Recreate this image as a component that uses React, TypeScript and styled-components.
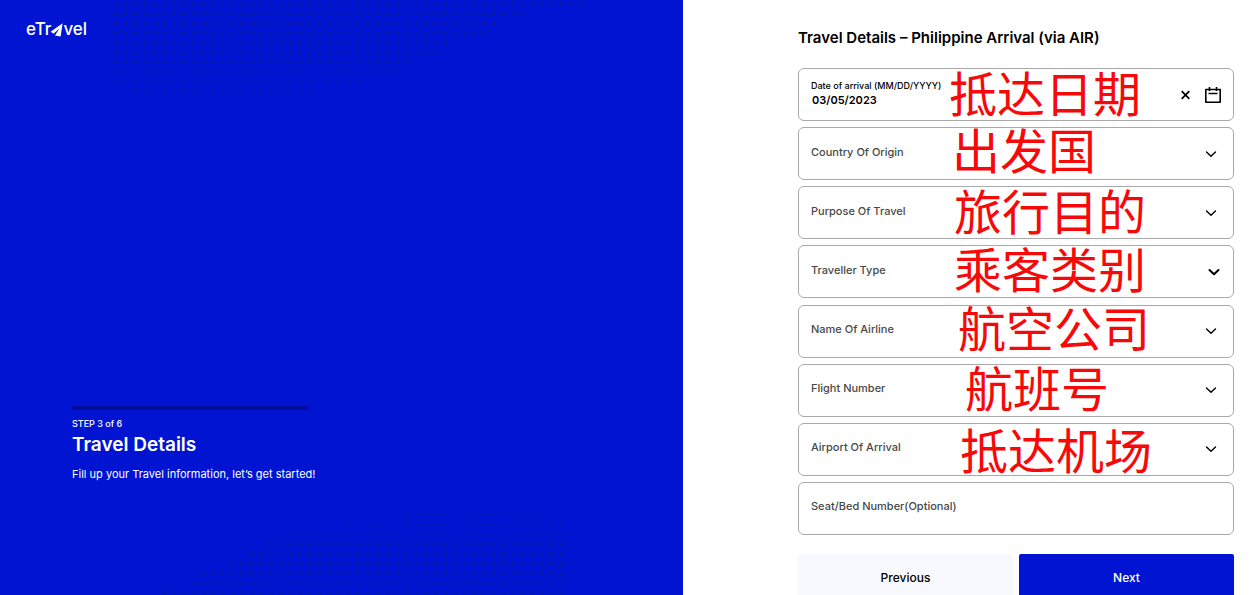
import React from 'react';
import styled, { createGlobalStyle } from 'styled-components';

const GlobalStyle = createGlobalStyle`
  *, *::before, *::after { box-sizing: border-box; }
  body { margin: 0; background: #fff; font-family: Inter, "Liberation Sans", sans-serif; color: #000; }
`;

const Page = styled.div`
  display: grid;
  grid-template-columns: 683fr 571fr;
  min-height: 100vh;
`;

const Hero = styled.section`
  position: relative;
  padding: 18px 24px 0 26px;
  background: #0014d2;
  color: #fff;
  overflow: hidden;
`;

const Dots = styled.svg<{ $edge: 'top' | 'bottom' }>`
  position: absolute;
  left: 0;
  ${(p) => p.$edge}: 0;
  width: 600px;
  height: 100px;
  fill: #0a1c9c;
  opacity: 0.75;
`;

const Logo = styled.div`
  display: flex;
  align-items: center;
  height: 22px;
  font-size: 17px;
  line-height: 22px;
  font-weight: 500;
`;

const LogoMark = styled.svg`
  margin: 2px -1px 0 -1px;
`;

const StepBlock = styled.div`
  position: relative;
  width: 236px;
  margin: 366px 0 0 46px;
  padding-top: 8px;
  border-top: 4px solid #000c9c;
  white-space: nowrap;
`;

const StepCount = styled.p`
  margin: 0;
  font-size: 9px;
  line-height: 12px;
  font-weight: 500;
`;

const StepTitle = styled.h1`
  margin: 2px 0 0;
  font-size: 19px;
  line-height: 26px;
  font-weight: 600;
`;

const StepText = styled.p`
  margin: 8px 0 0;
  font-size: 11px;
  line-height: 16px;
  font-weight: 400;
`;

const FormPanel = styled.form`
  display: flex;
  flex-direction: column;
  padding: 26px 20px 0 115px;
`;

const FormTitle = styled.h2`
  margin: 0 0 19px;
  font-size: 15px;
  line-height: 23px;
  font-weight: 600;
`;

const Fields = styled.div`
  display: flex;
  flex-direction: column;
  justify-content: space-between;
  min-height: 467px;
`;

const Field = styled.div`
  position: relative;
  display: flex;
  align-items: center;
  height: 53px;
  padding: 0 16px 0 12px;
  border: 1px solid #a9a9a9;
  border-radius: 6px;
`;

const Label = styled.label`
  padding-bottom: 4px;
  font-size: 11px;
  line-height: 16px;
  font-weight: 500;
  color: #484848;
  white-space: nowrap;
`;

const DateText = styled.div`
  display: flex;
  flex-direction: column;
  flex: 1;
  padding-bottom: 3px;
`;

const DateLabel = styled.label`
  font-size: 9px;
  line-height: 14px;
  font-weight: 500;
`;

const DateInput = styled.input`
  width: 100%;
  height: 14px;
  padding: 0 1px;
  border: 0;
  outline: 0;
  background: transparent;
  font: 600 11px/14px Inter, sans-serif;
  color: #000;
`;

const control = `
  flex: 1;
  min-width: 0;
  height: 100%;
  padding: 0 8px;
  border: 0;
  outline: 0;
  background: transparent;
  font: 400 11px/16px Inter, sans-serif;
`;

const Select = styled.select`
  ${control}
  appearance: none;
`;

const TextInput = styled.input`
  ${control}
`;

const Chevron = styled.svg<{ $strong?: boolean }>`
  flex: none;
  width: 12px;
  height: 12px;
  margin-right: ${(p) => (p.$strong ? -3 : 0)}px;
  fill: none;
  stroke: #000;
  stroke-width: ${(p) => (p.$strong ? 2 : 1.4)};
  stroke-linecap: round;
  stroke-linejoin: round;
  pointer-events: none;
`;

const IconButton = styled.button`
  display: flex;
  padding: 0;
  border: 0;
  background: none;
  cursor: pointer;
`;

const DateIcons = styled.div`
  display: flex;
  align-items: center;
  gap: 14px;
  margin-right: -5px;
`;

const Note = styled.span<{ $x: number; $y: number }>`
  position: absolute;
  left: ${(p) => p.$x}px;
  top: ${(p) => p.$y}px;
  font: 400 48px/48px "Noto Sans CJK SC", sans-serif;
  color: #f80808;
  white-space: nowrap;
  pointer-events: none;
`;

const Actions = styled.div`
  display: grid;
  grid-template-columns: 1fr 1fr;
  gap: 6px;
  margin-top: 19px;
`;

const Button = styled.button<{ $primary?: boolean }>`
  height: 48px;
  border: 0;
  border-radius: 2px;
  background: ${(p) => (p.$primary ? '#0014d2' : '#f8f9fe')};
  color: ${(p) => (p.$primary ? '#fff' : '#000')};
  font: 500 12px/16px Inter, sans-serif;
  cursor: pointer;
`;

const STEP = 9.68;

/* Each row is [first x, last x]. */
const topRows = [[116, 590], [116, 526], [116, 500], [116, 486], [116, 448], [116, 436], [116, 408], [116, 400], [116, 362], [116, 312]];
const bottomRows = [[400, 550], [345, 566], [272, 566], [264, 566], [245, 566], [226, 566], [196, 566], [186, 566], [156, 566], [150, 566]];

function dotRow([from, to]: number[], y: number, r: number) {
  const dots = [];
  for (let x = 116; x <= to; x += STEP) {
    if (x >= from) dots.push(<circle key={`${x}-${y}`} cx={x} cy={y} r={r} />);
  }
  return dots;
}

const selects = [
  { id: 'origin', label: 'Country Of Origin', note: '出发国', x: 153, y: -4 },
  { id: 'purpose', label: 'Purpose Of Travel', note: '旅行目的', x: 155, y: -2 },
  { id: 'type', label: 'Traveller Type', note: '乘客类别', x: 155, y: -3, strong: true },
  { id: 'airline', label: 'Name Of Airline', note: '航空公司', x: 159, y: -4 },
  { id: 'flight', label: 'Flight Number', note: '航班号', x: 166, y: -3 },
  { id: 'airport', label: 'Airport Of Arrival', note: '抵达机场', x: 161, y: 0 },
];

export default function App() {
  return (
    <Page>
      <GlobalStyle />
      <Hero>
        <Dots $edge="top" viewBox="0 0 600 100" aria-hidden="true">
          {topRows.map((row, i) => dotRow(row, 4 + i * STEP, i > 6 ? 1.4 : 2))}
        </Dots>
        <Dots $edge="bottom" viewBox="0 0 600 100" aria-hidden="true">
          {bottomRows.map((row, i) => dotRow(row, 13 + i * STEP, i < 3 ? 1.4 : 2))}
        </Dots>
        <Logo role="img" aria-label="eTravel">
          <span>eTr</span>
          <LogoMark width="14" height="14" viewBox="0 0 14 14" fill="#fff" aria-hidden="true">
            <path d="M12.6 0.3 L0.6 8.8 L3.6 10.8 L9.4 5.2 L5 12.4 L10.6 13.6 Z" />
          </LogoMark>
          <span>vel</span>
        </Logo>
        <StepBlock>
          <StepCount>STEP 3 of 6</StepCount>
          <StepTitle>Travel Details</StepTitle>
          <StepText>Fill up your Travel information, let’s get started!</StepText>
        </StepBlock>
      </Hero>
      <FormPanel onSubmit={(e) => e.preventDefault()}>
        <FormTitle>Travel Details – Philippine Arrival (via AIR)</FormTitle>
        <Fields>
          <Field>
            <DateText>
              <DateLabel htmlFor="date">Date of arrival (MM/DD/YYYY)</DateLabel>
              <DateInput id="date" defaultValue="03/05/2023" />
            </DateText>
            <DateIcons>
              <IconButton type="button" aria-label="Clear date">
                <svg width="9" height="10" viewBox="0 0 9 10" stroke="#000" strokeWidth="1.7">
                  <path d="M0.7 1.2 L8.3 8.8 M8.3 1.2 L0.7 8.8" />
                </svg>
              </IconButton>
              <IconButton type="button" aria-label="Open calendar">
                <svg width="18" height="18" viewBox="0 0 18 18" fill="none" stroke="#000" strokeWidth="1.6">
                  <path d="M1.8 3.5 H16.2 V16.2 H1.8 Z M5.5 1 V5 M12.5 1 V5 M4.5 7.5 H13.5" strokeLinejoin="round" />
                </svg>
              </IconButton>
            </DateIcons>
            <Note $x={150} $y={-2}>抵达日期</Note>
          </Field>
          {selects.map((s) => (
            <Field key={s.id}>
              <Label htmlFor={s.id}>{s.label}</Label>
              <Select id={s.id} defaultValue="">
                <option value="" />
              </Select>
              <Chevron $strong={s.strong} viewBox="0 0 12 12" aria-hidden="true">
                <path d="M1.5 4 L6 8.3 L10.5 4" />
              </Chevron>
              <Note $x={s.x} $y={s.y}>{s.note}</Note>
            </Field>
          ))}
          <Field>
            <Label htmlFor="seat">Seat/Bed Number(Optional)</Label>
            <TextInput id="seat" />
          </Field>
        </Fields>
        <Actions>
          <Button type="button">Previous</Button>
          <Button type="submit" $primary>Next</Button>
        </Actions>
      </FormPanel>
    </Page>
  );
}
